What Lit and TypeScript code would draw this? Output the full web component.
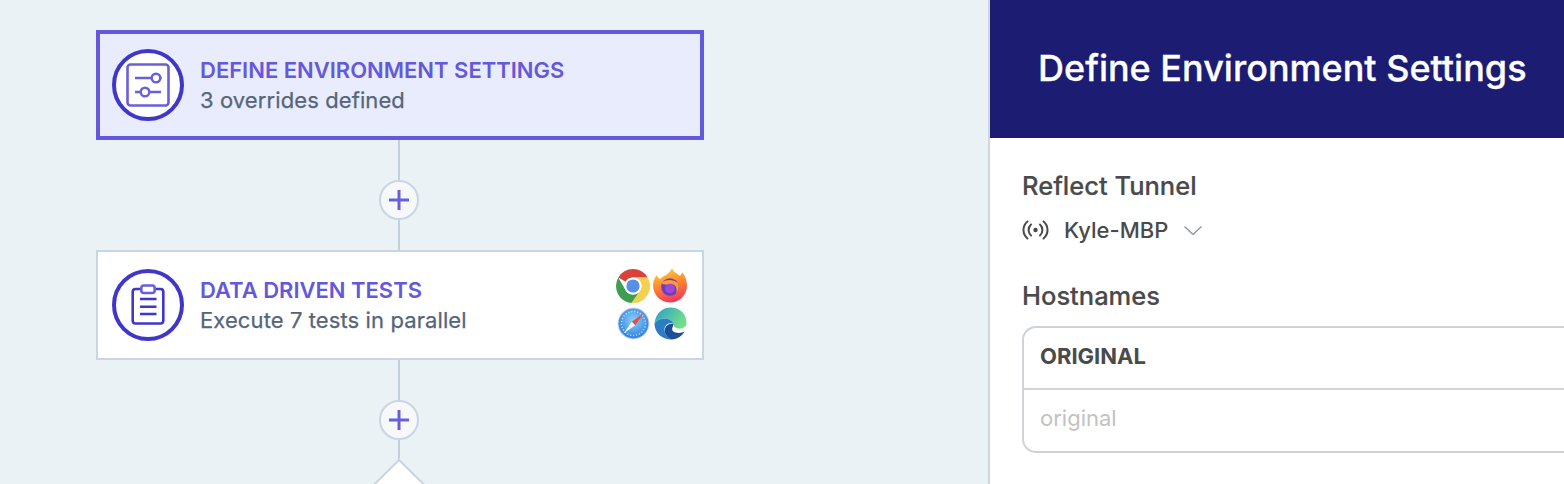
import { LitElement, html, css, svg } from "lit";
import { customElement } from "lit/decorators.js";

const plus = html`<div class="plus"><svg width="22" height="22" viewBox="0 0 22 22"><path d="M11 1v20M1 11h20" stroke="#6a5fdb" stroke-width="3" fill="none"/></svg></div>`;

const browsers = html`<svg class="browsers" width="76" height="76" viewBox="0 0 76 76">
  <defs>
    <linearGradient id="fx" x1="0.3" y1="0" x2="0.6" y2="1"><stop offset="0" stop-color="#ffd23e"/><stop offset=".45" stop-color="#ff8a2e"/><stop offset="1" stop-color="#f0355e"/></linearGradient>
    <radialGradient id="sf" cx=".5" cy=".4" r=".6"><stop offset="0" stop-color="#8fd0fb"/><stop offset="1" stop-color="#2c7fe0"/></radialGradient>
    <linearGradient id="eg" x1="0" y1="0" x2="1" y2=".5"><stop offset="0" stop-color="#2b9ccb"/><stop offset="1" stop-color="#72de8a"/></linearGradient>
  </defs>
  <g transform="translate(19 19)">
    <path d="M0 -17A17 17 0 0 1 14.700 -8.500L0 -8.500A8.500 8.500 0 0 0 -7.400 -4.200L-14.700 -8.500A17 17 0 0 1 0 -17Z" fill="#d8423a"/>
    <path d="M14.700 -8.500A17 17 0 0 1 -1.500 17L7.400 4.200A8.500 8.500 0 0 0 0 -8.500Z" fill="#f5cf4f"/>
    <path d="M-1.500 17A17 17 0 0 1 -14.700 -8.500L-7.400 4.200A8.500 8.500 0 0 0 7.400 4.200Z" fill="#3f9d53"/>
    <circle r="8.600" fill="#fff"/><circle r="6.600" fill="#5a8fe8"/>
  </g>
  <g transform="translate(56 19)">
    <path d="M2 -18C3 -14 7 -13 10 -10C11 -11 12 -13 12 -14C15.500 -10 17 -5 17 0A17 17 0 1 1 -17 -1C-17 -5 -15 -9 -13 -11C-12.500 -9 -12 -8 -10 -7C-7 -10 0 -12 2 -18Z" fill="url(#fx)"/>
    <circle cy="1" r="8.800" fill="#6f3ac4"/>
    <path d="M-9 -3C-4 -7 3 -7 8 -3C9.500 1 8.500 5 6 7.500C8 2 5 -2 1 -2C-2 -1 -6 -1 -9 -3Z" fill="#ff9a2e"/>
    <circle cx="0" cy="2.500" r="4.800" fill="#9a48d6"/>
  </g>
  <g transform="translate(19.500 56.500)">
    <circle r="16" fill="#d5dbe2"/><circle r="15" fill="url(#sf)"/><circle r="12" fill="none" stroke="#d4ebfc" stroke-width="1.400" stroke-dasharray="1 2"/>
    <path d="M10 -10L1.800 1.800L-1.800 -1.800Z" fill="#ec4b3f"/><path d="M-10 10L1.800 1.800L-1.800 -1.800Z" fill="#f4f6f8"/>
  </g>
  <g transform="translate(56.500 56.500)">
    <path d="M-16 0C-15 -10 -8 -16 0 -16C10 -16 16 -9 16 -1C16 3 13 5 9 5C5 5 3 3 3 0C0 -6 -11 -7 -16 0Z" fill="url(#eg)"/>
    <path d="M-16 0C-11 -7 0 -6 3 0C-2 -2 -7 2 -6 8C-5 12 -2 15 1 16C-9 16 -16 9 -16 0Z" fill="#2b7dc4"/>
    <path d="M-6 8C-6 3 -3 0 3 0C3 3 -1 7 5 9C9 10 12 9 14 8C12 12 7 16 1 16C-2 15 -5 12 -6 8Z" fill="#1c4f96"/>
  </g>
</svg>`;

const sliders = svg`<rect x="-20.500" y="-20.500" width="41" height="41" rx="3" fill="none" stroke="#6a5fdb" stroke-width="2.600"/>
  <path d="M-13 -7H3.500M12.500 -7H13.500M-13 7H-7.500M1.500 7H13" stroke="#6a5fdb" stroke-width="2.400" fill="none"/>
  <circle cx="8" cy="-7" r="4.300" fill="none" stroke="#6a5fdb" stroke-width="2.400"/>
  <circle cx="-3" cy="7" r="4.300" fill="none" stroke="#6a5fdb" stroke-width="2.400"/>`;

const clipboard = svg`<path d="M-6.500 -16H-12.500A2.800 2.800 0 0 0 -15.300 -13.200V15.700A2.800 2.800 0 0 0 -12.500 18.500H12.500A2.800 2.800 0 0 0 15.300 15.700V-13.200A2.800 2.800 0 0 0 12.500 -16H6.500" fill="none" stroke="#3f37c9" stroke-width="2.600"/>
  <rect x="-6.700" y="-19.500" width="13.400" height="7.500" rx="2.500" fill="none" stroke="#6a5fdb" stroke-width="2.600"/>
  <path d="M-8 -6H8.500M-8 1.700H8.500M-8 9H8.500" stroke="#3f37c9" stroke-width="2.600" fill="none"/>`;

@customElement("app-root")
export class AppRoot extends LitElement {
  static styles = css`
    :host { display: flex; width: 1564px; height: 484px; overflow: hidden; font-family: Inter, "Liberation Sans", sans-serif; background: #ebf2f6; }
    .canvas { width: 988px; flex: none; box-sizing: border-box; padding: 30px 0 0 96px; display: flex; flex-direction: column; align-items: flex-start; }
    .node { box-sizing: border-box; width: 608px; height: 110px; display: flex; align-items: center; padding: 0 16px 0 14px; background: #fff; border: 2px solid #c9d6e2; }
    .node.active { background: #e8ecfd; border: 4px solid #6459db; padding: 0 14px 0 12px; }
    .badge { flex: none; width: 72px; height: 72px; margin-right: 16px; }
    .text { flex: 1; display: flex; flex-direction: column; gap: 6px; }
    .title { font-size: 22px; line-height: 24px; font-weight: 600; color: #6459db; letter-spacing: -0.01px; }
    .sub { font-size: 22px; line-height: 24px; color: #55657a; letter-spacing: 0.1px; -webkit-text-stroke: 0.25px #55657a; }
    .browsers { flex: none; margin-right: -4px; }
    .stem { width: 606px; display: flex; flex-direction: column; align-items: center; }
    .line { width: 2px; background: #c3d0dc; }
    .line.l40 { height: 40px; }
    .line.l30 { height: 30px; }
    .line.l20 { height: 19px; }
    .plus { box-sizing: border-box; width: 40px; height: 40px; border-radius: 50%; border: 2px solid #c9d6e2; background: #f6f8fc; display: flex; align-items: center; justify-content: center; }
    .diamond { display: block; overflow: visible; }
    .panel { flex: 1; border-left: 2px solid #ced7df; background: #fff; display: flex; flex-direction: column; min-width: 0; }
    .head { height: 138px; flex: none; background: #1b1c72; color: #fff; display: flex; align-items: center; box-sizing: border-box; padding: 0 0 2px 48px; font-size: 36px; font-weight: 500; white-space: nowrap; -webkit-text-stroke: 0.3px #fff; }
    .body { padding: 32px 0 0 32px; display: flex; flex-direction: column; }
    .label { font-size: 25.500px; line-height: 32px; font-weight: 500; color: #4a4a4a; -webkit-text-stroke: 0.2px #4a4a4a; }
    .tunnel { display: flex; align-items: center; height: 32px; margin-top: 12px; font-size: 22px; color: #4a4a4a; font-weight: 500; }
    .tunnel .sig { margin-right: 15px; }
    .tunnel .chev { margin-left: 16px; }
    .host-label { margin-top: 34px; }
    .table { box-sizing: border-box; margin-top: 14px; margin-right: -20px; height: 127px; border: 2px solid #cfd3d8; border-right: none; border-radius: 14px 0 0 14px; display: flex; flex-direction: column; }
    .th { height: 62px; flex: none; box-sizing: border-box; border-bottom: 2px solid #cfd3d8; padding: 0 0 4px 16px; display: flex; align-items: center; font-size: 22px; font-weight: 700; color: #4a4a4a; }
    .td { flex: 1; padding: 0 0 6px 16px; display: flex; align-items: center; font-size: 22px; color: #c2c2c2; }
  `;

  render() {
    return html`
      <div class="canvas">
        <div class="node active">
          <svg class="badge" viewBox="-36 -36 72 72"><circle r="34" fill="#fff" stroke="#3f37c9" stroke-width="4"/>${sliders}</svg>
          <div class="text"><div class="title">DEFINE ENVIRONMENT SETTINGS</div><div class="sub">3 overrides defined</div></div>
        </div>
        <div class="stem"><div class="line l40"></div>${plus}<div class="line l30"></div></div>
        <div class="node">
          <svg class="badge" viewBox="-36 -36 72 72"><circle r="34" fill="#fff" stroke="#3f37c9" stroke-width="4"/>${clipboard}</svg>
          <div class="text"><div class="title">DATA DRIVEN TESTS</div><div class="sub">Execute 7 tests in parallel</div></div>
          ${browsers}
        </div>
        <div class="stem"><div class="line l40"></div>${plus}<div class="line l20"></div>
          <svg class="diamond" width="120" height="25" viewBox="0 0 120 25"><path d="M0 60L60 1L120 60Z" fill="#fff" stroke="#c9d6e2" stroke-width="2"/></svg>
        </div>
      </div>
      <div class="panel">
        <div class="head">Define Environment Settings</div>
        <div class="body">
          <div class="label">Reflect Tunnel</div>
          <div class="tunnel">
            <svg class="sig" width="27" height="20" viewBox="0 0 27 20" fill="none" stroke="#4a4a4a" stroke-width="2" stroke-linecap="round"><circle cx="13.500" cy="10" r="2.200" fill="#4a4a4a" stroke="none"/><path d="M9 4.500a7.500 7.500 0 0 0 0 11M18 4.500a7.500 7.500 0 0 1 0 11M5.500 1.500a11 11 0 0 0 0 17M21.500 1.500a11 11 0 0 1 0 17"/></svg>
            Kyle-MBP
            <svg class="chev" width="18" height="9" viewBox="0 0 18 9" fill="none" stroke="#8a8f96" stroke-width="1.200"><path d="M0.500 0.500l8.500 8l8.500-8"/></svg>
          </div>
          <div class="label host-label">Hostnames</div>
          <div class="table"><div class="th">ORIGINAL</div><div class="td">original</div></div>
        </div>
      </div>
    `;
  }
}
